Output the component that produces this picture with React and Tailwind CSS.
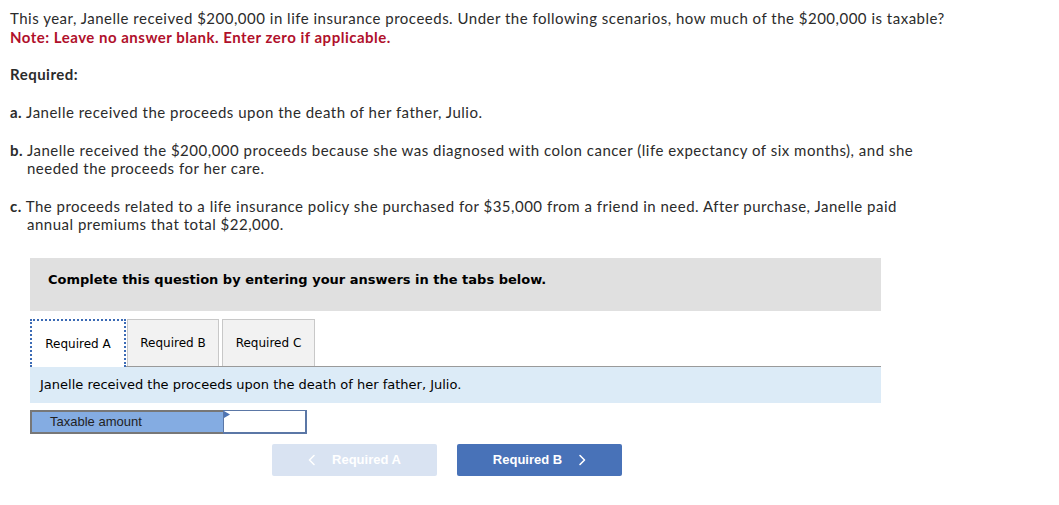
import React from "react";

const body = "font-['Lato','Liberation_Sans',sans-serif]";
const verdana = "font-['DejaVu_Sans','Verdana',sans-serif]";

function Chevron({ dir = "right" }) {
  return (
    <svg width="8" height="12" viewBox="0 0 8 12" fill="none" className="inline-block">
      <path
        d={dir === "right" ? "M2 1.5 L6.5 6 L2 10.5" : "M6 1.5 L1.5 6 L6 10.5"}
        stroke="currentColor"
        strokeWidth="1.6"
        strokeLinecap="round"
        strokeLinejoin="round"
      />
    </svg>
  );
}

export default function App() {
  return (
    <div className={`w-[1059px] h-[505px] bg-white text-[#2b2b2b] ${body}`}>
      <div className="pl-[10px] pt-[9px] text-[15px] leading-[18px] tracking-[0.5px]">
        <p>
          This year, Janelle received $200,000 in life insurance proceeds. Under the following scenarios, how much of the $200,000 is taxable?
        </p>
        <p className="mt-[1px] font-bold text-[#b0102b]">Note: Leave no answer blank. Enter zero if applicable.</p>

        <p className="mt-[19px] font-bold">Required:</p>

        <p className="mt-[20px] pl-[17px] indent-[-17px]">
          <span className="font-bold">a.</span> Janelle received the proceeds upon the death of her father, Julio.
        </p>
        <p className="mt-[20px] pl-[17px] indent-[-17px] w-[925px]">
          <span className="font-bold">b.</span> Janelle received the $200,000 proceeds because she was diagnosed with colon cancer (life expectancy of six months), and she needed the proceeds for her care.
        </p>
        <p className="mt-[20px] pl-[17px] indent-[-17px] w-[925px]">
          <span className="font-bold">c.</span> The proceeds related to a life insurance policy she purchased for $35,000 from a friend in need. After purchase, Janelle paid annual premiums that total $22,000.
        </p>
      </div>

      <div className="ml-[30px] w-[851px] mt-[25px]">
        <div className={`h-[53px] bg-[#e0e0e0] pt-[14px] pl-[18px] ${verdana} font-bold text-[13px] leading-[16px] text-black`}>
          Complete this question by entering your answers in the tabs below.
        </div>

        <div className={`mt-[7px] flex items-end border-b border-[#9a9a9a] ${verdana} text-[12px] text-black`}>
          <div className="h-[48px] w-[96px] flex items-center justify-center bg-white border-2 border-dotted border-[#3c6bb5] border-b-0 relative top-[1px]">
            Required A
          </div>
          <div className="h-[47px] w-[92px] ml-[1px] flex items-center justify-center bg-[#f2f2f2] border border-[#c8c8c8] border-b-0">
            Required B
          </div>
          <div className="h-[47px] w-[93px] ml-[3px] flex items-center justify-center bg-[#f2f2f2] border border-[#c8c8c8] border-b-0">
            Required C
          </div>
        </div>

        <div className={`h-[36px] bg-[#dcebf7] flex items-center pl-[10px] ${verdana} text-[13px] text-black`}>
          Janelle received the proceeds upon the death of her father, Julio.
        </div>

        <div className="mt-[7px] flex h-[24px]">
          <div className="w-[193px] h-full bg-[#84ace2] border-2 border-[#777] border-r-0 flex items-center pl-[18px] font-['Liberation_Sans',sans-serif] text-[13px] text-[#222]">
            Taxable amount
          </div>
          <div className="relative w-[84px] h-full bg-white border-2 border-[#5b77a6] border-t-[1.5px] border-l-[1.5px]">
            <svg width="6" height="8" viewBox="0 0 6 8" className="absolute left-0 top-0">
              <path d="M0 0 L6 3.5 L0 7 Z" fill="#4d74b3" />
            </svg>
          </div>
        </div>

        <div className="mt-[10px] ml-[242px] flex gap-[20px] font-['Liberation_Sans',sans-serif] font-bold text-[13px] text-white">
          <div className="w-[165px] h-[32px] rounded-[2px] bg-[#d9e3f2] flex items-center justify-center gap-[16px]">
            <Chevron dir="left" />
            <span>Required A</span>
          </div>
          <div className="w-[165px] h-[32px] rounded-[2px] bg-[#4872b8] flex items-center justify-center gap-[16px]">
            <span>Required B</span>
            <Chevron dir="right" />
          </div>
        </div>
      </div>
    </div>
  );
}
